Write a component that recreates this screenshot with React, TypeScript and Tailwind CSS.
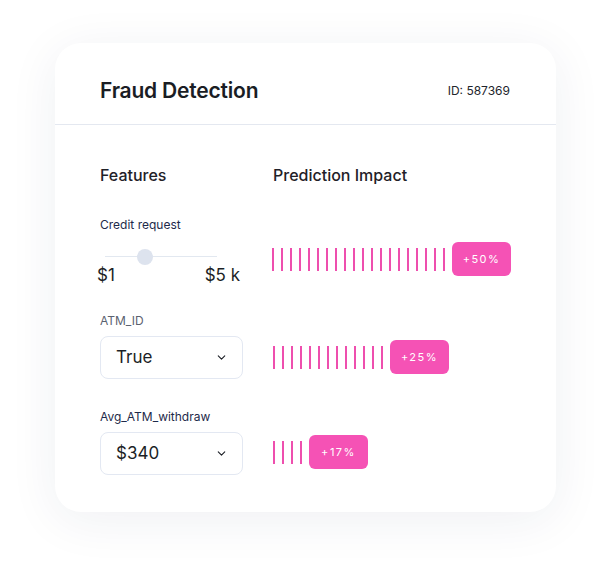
import { ChevronDown } from 'lucide-react';

const font = { fontFamily: 'Inter, "Noto Sans", sans-serif' };

function Bars({ count, label }: { count: number; label: string }) {
  return (
    <div className="flex items-center">
      <div className="flex items-center gap-[7px]">
        {Array.from({ length: count }).map((_, i) => (
          <div key={i} className="w-[2px] h-[23px] bg-[#ee4fae]" />
        ))}
      </div>
      <div className="ml-[7px] w-[59px] h-[34px] rounded-[6px] bg-[#f552b5] flex items-center justify-center text-white text-[11px] tracking-[1.5px]">
        {label}
      </div>
    </div>
  );
}

function Select({ value }: { value: string }) {
  return (
    <div className="mt-[7px] w-[143px] h-[43px] rounded-[8px] border border-[#e3e8f2] flex items-center justify-between pl-[15px] pr-[14px]">
      <span className="text-[17px] text-[#1c1f26]">{value}</span>
      <ChevronDown className="w-[13px] h-[13px] text-[#1c1f26]" strokeWidth={2} />
    </div>
  );
}

export default function App() {
  return (
    <div className="min-h-[578px] bg-white pt-[43px]" style={font}>
      <div className="mx-auto w-[501px] rounded-[26px] bg-white shadow-[0_8px_50px_rgba(30,41,80,0.07)]">
        {/* Header */}
        <div className="h-[82px] flex items-center justify-between pl-[45px] pr-[46px] pt-[14px] border-b border-[#e4e8f0]">
          <h1 className="text-[21px] font-semibold text-[#1a1d24] tracking-[-0.2px]">Fraud Detection</h1>
          <span className="text-[12px] text-[#22252c]">ID: 587369</span>
        </div>

        {/* Body */}
        <div className="pl-[45px] pr-[45px] pt-[38px] pb-[37px]">
          <div className="flex h-[24px] items-center text-[16px] font-medium text-[#1f2128]">
            <div className="w-[173px]">Features</div>
            <div>Prediction Impact</div>
          </div>

          {/* Credit request */}
          <div className="flex mt-[30px]">
            <div className="w-[173px]">
              <div className="text-[12px] leading-[16px] text-[#1e2a4a]">Credit request</div>
              <div className="relative mt-[16px] ml-[5px] w-[112px] h-[16px]">
                <div className="absolute left-0 right-0 top-[7px] h-[1px] bg-[#e2e8f0]" />
                <div className="absolute left-[32px] top-0 w-[16px] h-[16px] rounded-full bg-[#dde3ee]" />
              </div>
              <div className="flex justify-between w-[143px] -ml-[3px] text-[17px] leading-[20px] text-[#1c1f26]">
                <span>$1</span>
                <span>$5 k</span>
              </div>
            </div>
            <div className="mt-[25px]">
              <Bars count={20} label="+50%" />
            </div>
          </div>

          {/* ATM_ID */}
          <div className="flex mt-[28px]">
            <div className="w-[173px]">
              <div className="text-[12px] leading-[16px] text-[#5b6270]">ATM_ID</div>
              <Select value="True" />
            </div>
            <div className="mt-[27px]">
              <Bars count={13} label="+25%" />
            </div>
          </div>

          {/* Avg_ATM_withdraw */}
          <div className="flex mt-[30px]">
            <div className="w-[173px]">
              <div className="text-[12px] leading-[16px] text-[#1e2a4a]">Avg_ATM_withdraw</div>
              <Select value="$340" />
            </div>
            <div className="mt-[26px]">
              <Bars count={4} label="+17%" />
            </div>
          </div>
        </div>
      </div>
    </div>
  );
}
